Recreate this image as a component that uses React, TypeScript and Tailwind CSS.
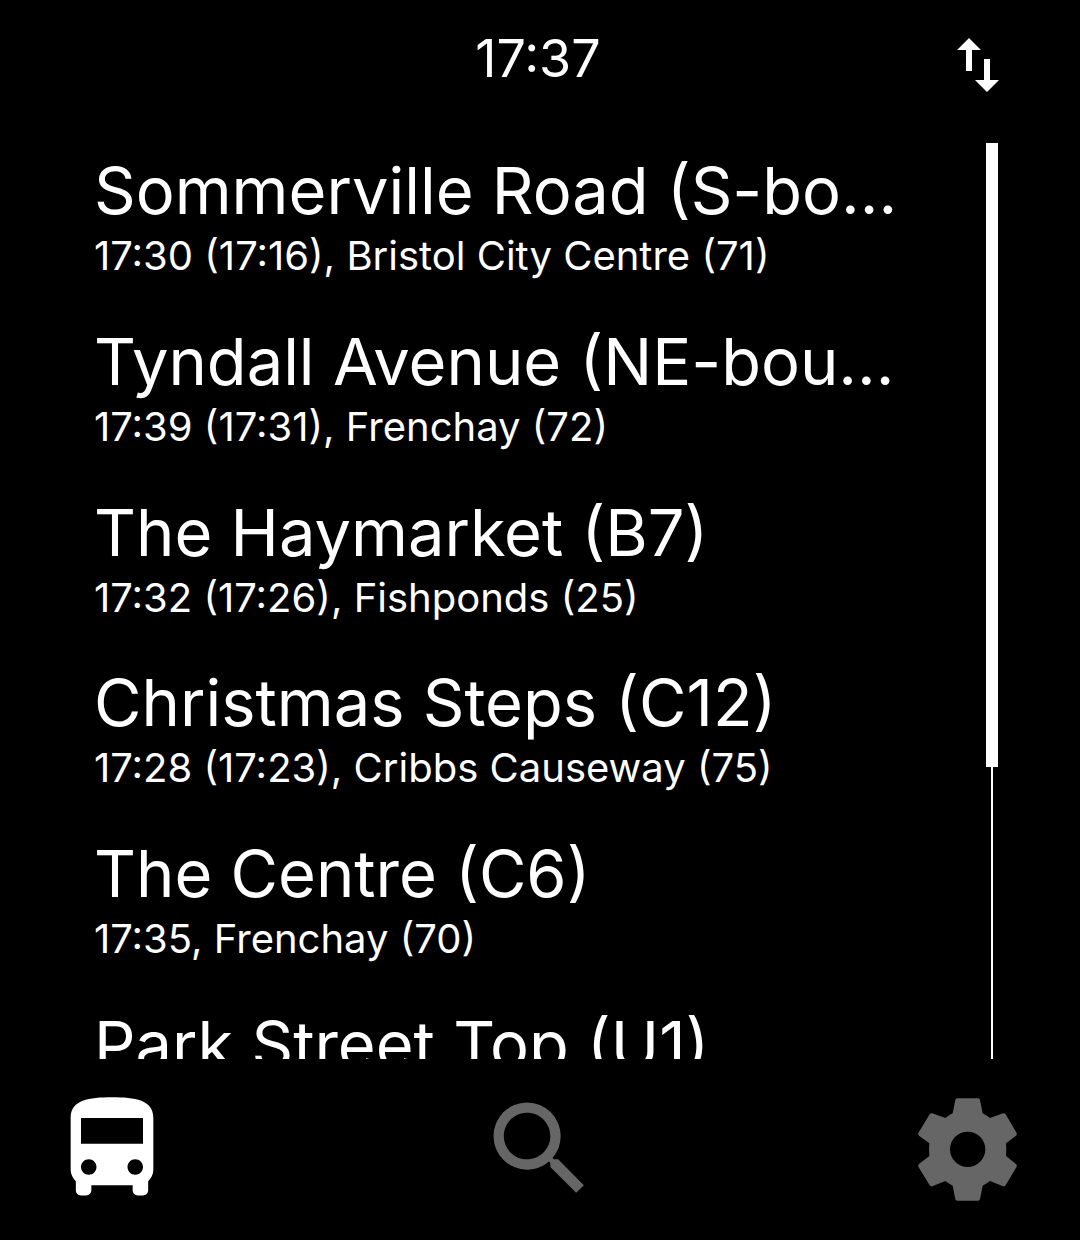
import { MdDirectionsBus, MdSearch, MdSwapVert } from "react-icons/md";

const stops = [
  { name: "Sommerville Road (S-bo...", sub: "17:30 (17:16), Bristol City Centre (71)" },
  { name: "Tyndall Avenue (NE-bou...", sub: "17:39 (17:31), Frenchay (72)" },
  { name: "The Haymarket (B7)", sub: "17:32 (17:26), Fishponds (25)" },
  { name: "Christmas Steps (C12)", sub: "17:28 (17:23), Cribbs Causeway (75)" },
  { name: "The Centre (C6)", sub: "17:35, Frenchay (70)" },
  { name: "Park Street Top (U1)", sub: "" },
];

function Gear() {
  return (
    <svg width={124} height={124} viewBox="18 21 372 372" className="block text-[#666]" fill="currentColor">
      <path
        fillRule="evenodd"
        d="M172 55H234Q239 55 240 60L248 100Q260 106 270 114L309 100Q314 99 317 103L350 159Q352 164 348 167L318 190Q320 208 318 228L348 252Q352 255 350 260L317 316Q314 320 309 319L270 303Q260 311 248 317L240 358Q239 362 234 362H172Q167 362 166 358L158 317Q146 311 136 303L97 319Q92 320 89 316L55 260Q53 255 57 252L88 228Q86 208 88 190L57 167Q53 164 55 159L89 103Q92 99 97 100L136 114Q146 106 158 100L166 60Q167 55 172 55ZM203 155A53 53 0 1 0 203 261A53 53 0 1 0 203 155Z"
      />
    </svg>
  );
}

export default function App() {
  return (
    <div className="w-[1080px] h-[1240px] bg-black text-white flex flex-col overflow-hidden font-['Inter',sans-serif]">
      {/* header */}
      <div className="h-[143px] shrink-0 grid grid-cols-[1fr_auto_1fr]">
        <div />
        <span className="text-[52px] leading-none mt-[33px] mr-[4px]">17:37</span>
        <div className="flex justify-end pr-[66px] pt-[29px]">
          <MdSwapVert size={72} className="block" />
        </div>
      </div>

      {/* list and scrollbar */}
      <div className="h-[916px] shrink-0 flex overflow-hidden">
        <div className="w-[986px] shrink-0 pl-[94px] pt-[8px]">
          {stops.map((s) => (
            <div key={s.name} className="h-[170.75px]">
              <div className="text-[65px] leading-[80px] whitespace-nowrap">{s.name}</div>
              {s.sub && (
                <div className="text-[40px] leading-[46px] mt-[2px] whitespace-nowrap">{s.sub}</div>
              )}
            </div>
          ))}
        </div>
        <div className="w-[12px] flex flex-col items-center">
          <div className="w-[12px] h-[624px] bg-white" />
          <div className="w-[2px] flex-1 bg-white" />
        </div>
      </div>

      {/* bottom tabs */}
      <div className="flex-1 flex justify-between px-[50px] pt-[28px]">
        <MdDirectionsBus size={124} className="block text-white" />
        <MdSearch size={124} className="block text-[#666]" />
        <Gear />
      </div>
    </div>
  );
}
